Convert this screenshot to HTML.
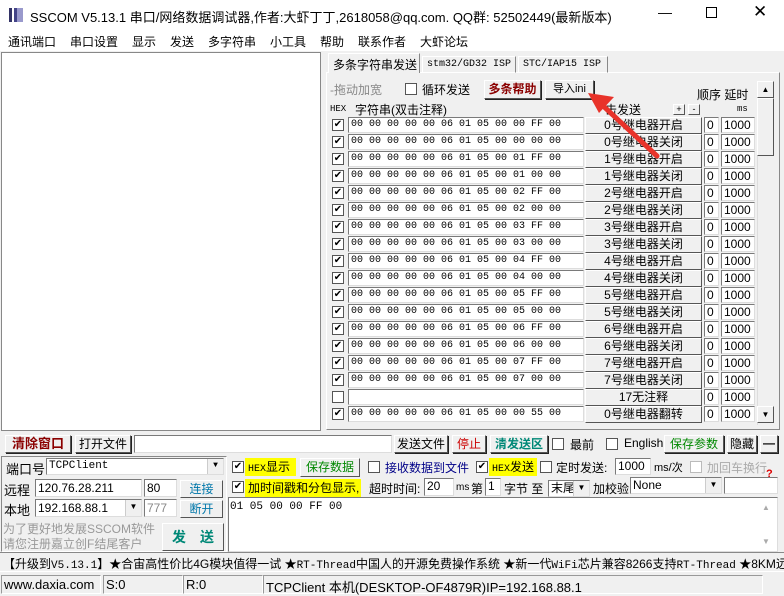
<!DOCTYPE html>
<html><head><meta charset="utf-8"><style>
*{box-sizing:border-box;margin:0;padding:0}
body{width:784px;height:595px;background:#f0f0f0;font-family:"Liberation Sans","Noto Sans CJK SC",sans-serif;font-size:12px;color:#000;position:relative;overflow:hidden}
.a{position:absolute;white-space:nowrap}
.in{position:absolute;background:#fff;border:1px solid #7a7a7a;border-right-color:#ddd;border-bottom-color:#ddd;white-space:nowrap;overflow:hidden;line-height:14px;padding-left:2px}
.btn{position:absolute;background:#f0f0f0;border:1px solid #fff;border-right-color:#555;border-bottom-color:#555;text-align:center;white-space:nowrap;box-shadow:1px 1px 0 #222}
.cb{position:absolute;width:12px;height:12px;background:#fff;border:1px solid #555;font-size:10px;line-height:10px;text-align:center}
.mono{font-family:"Liberation Mono","Noto Sans CJK SC",monospace;font-size:11px}
.hx{font-family:"Liberation Mono",monospace;font-size:10px}
.dd{position:absolute;width:16px;background:#f0f0f0;border-left:1px solid #ccc;top:0;bottom:0;right:0;font-size:8px;text-align:center;line-height:14px}
.m{position:absolute;top:33px;font-size:12px}
</style></head><body>
<div class="a" style="left:0;top:0;width:784px;height:30px;background:#fff"></div>
<div class="a" style="top:8px;left:9px;width:14px;height:14px;background:linear-gradient(90deg,#336 0 3px,#fff 3px 5px,#448 5px 8px,#99c 8px)"></div>
<div class="a" style="left:30px;top:7px;font-size:13px">SSCOM V5.13.1 串口/网络数据调试器,作者:大虾丁丁,2618058@qq.com. QQ群: 52502449(最新版本)</div>
<div class="a" style="left:658px;top:4px;font-size:14px">—</div>
<div class="a" style="left:706px;top:7px;width:11px;height:11px;border:1px solid #000"></div>
<div class="a" style="left:753px;top:2px;font-size:17px">✕</div>
<div class="a" style="left:0;top:30px;width:784px;height:21px;background:#fff"></div>
<div class="m" style="left:8px">通讯端口</div><div class="m" style="left:70px">串口设置</div><div class="m" style="left:132px">显示</div><div class="m" style="left:170px">发送</div><div class="m" style="left:208px">多字符串</div><div class="m" style="left:270px">小工具</div><div class="m" style="left:320px">帮助</div><div class="m" style="left:358px">联系作者</div><div class="m" style="left:420px">大虾论坛</div>
<div class="a" style="left:1px;top:52px;width:320px;height:379px;background:#fff;border:1px solid #888"></div>
<div class="a" style="left:326px;top:72px;width:454px;height:358px;border:1px solid #fff;border-right-color:#888;border-bottom-color:#888"></div>
<div class="a" style="left:328px;top:53px;width:92px;height:20px;background:#f0f0f0;border:1px solid #fff;border-bottom:none;border-right-color:#888;padding:2px 0 0 4px;font-size:12px">多条字符串发送</div>
<div class="a mono" style="left:422px;top:56px;width:94px;height:17px;border:1px solid #fff;border-right-color:#888;padding:2px 0 0 4px;font-size:10px">stm32/GD32 ISP</div>
<div class="a mono" style="left:518px;top:56px;width:90px;height:17px;border:1px solid #fff;border-right-color:#888;padding:2px 0 0 4px;font-size:10px">STC/IAP15 ISP</div>
<div class="a" style="left:330px;top:81px;color:#888;font-size:12px">-拖动加宽</div>
<div class="cb" style="left:405px;top:83px"></div>
<div class="a" style="left:422px;top:81px">循环发送</div>
<div class="btn" style="left:484px;top:80px;width:57px;height:19px;color:#8b0000;font-weight:bold;line-height:17px">多条帮助</div>
<div class="btn" style="left:545px;top:80px;width:49px;height:19px;font-size:11px;line-height:17px">导入ini</div>
<div class="a" style="left:697px;top:86px">顺序 延时</div>
<div class="a mono" style="left:330px;top:104px;font-size:9px">HEX</div>
<div class="a" style="left:355px;top:101px">字符串(双击注释)</div>
<div class="a" style="left:605px;top:101px">击发送</div>
<div class="btn" style="left:673px;top:104px;width:12px;height:11px;font-size:9px;line-height:9px;box-shadow:none">+</div>
<div class="btn" style="left:688px;top:104px;width:12px;height:11px;font-size:9px;line-height:9px;box-shadow:none">-</div>
<div class="a mono" style="left:737px;top:104px;font-size:9px">ms</div>
<div class="a" style="left:757px;top:104px;width:17px;height:321px;background:#f0f0f0;border-left:1px solid #ddd"></div>
<div class="btn" style="left:757px;top:81px;width:17px;height:17px;font-size:8px;line-height:15px;box-shadow:none">▲</div>
<div class="btn" style="left:757px;top:98px;width:17px;height:58px;box-shadow:none"></div>
<div class="btn" style="left:757px;top:406px;width:17px;height:17px;font-size:8px;line-height:15px;box-shadow:none">▼</div>

<div class="cb" style="left:332px;top:119px">✔</div><div class="in hx" style="left:348px;top:117px;width:236px;height:16px">00 00 00 00 00 06 01 05 00 00 FF 00</div><div class="btn" style="left:585px;top:117px;width:117px;height:17px;box-shadow:none;line-height:15px">0号继电器开启</div><div class="in" style="left:704px;top:117px;width:15px;height:16px">0</div><div class="in" style="left:721px;top:117px;width:34px;height:16px">1000</div>
<div class="cb" style="left:332px;top:136px">✔</div><div class="in hx" style="left:348px;top:134px;width:236px;height:16px">00 00 00 00 00 06 01 05 00 00 00 00</div><div class="btn" style="left:585px;top:134px;width:117px;height:17px;box-shadow:none;line-height:15px">0号继电器关闭</div><div class="in" style="left:704px;top:134px;width:15px;height:16px">0</div><div class="in" style="left:721px;top:134px;width:34px;height:16px">1000</div>
<div class="cb" style="left:332px;top:153px">✔</div><div class="in hx" style="left:348px;top:151px;width:236px;height:16px">00 00 00 00 00 06 01 05 00 01 FF 00</div><div class="btn" style="left:585px;top:151px;width:117px;height:17px;box-shadow:none;line-height:15px">1号继电器开启</div><div class="in" style="left:704px;top:151px;width:15px;height:16px">0</div><div class="in" style="left:721px;top:151px;width:34px;height:16px">1000</div>
<div class="cb" style="left:332px;top:170px">✔</div><div class="in hx" style="left:348px;top:168px;width:236px;height:16px">00 00 00 00 00 06 01 05 00 01 00 00</div><div class="btn" style="left:585px;top:168px;width:117px;height:17px;box-shadow:none;line-height:15px">1号继电器关闭</div><div class="in" style="left:704px;top:168px;width:15px;height:16px">0</div><div class="in" style="left:721px;top:168px;width:34px;height:16px">1000</div>
<div class="cb" style="left:332px;top:187px">✔</div><div class="in hx" style="left:348px;top:185px;width:236px;height:16px">00 00 00 00 00 06 01 05 00 02 FF 00</div><div class="btn" style="left:585px;top:185px;width:117px;height:17px;box-shadow:none;line-height:15px">2号继电器开启</div><div class="in" style="left:704px;top:185px;width:15px;height:16px">0</div><div class="in" style="left:721px;top:185px;width:34px;height:16px">1000</div>
<div class="cb" style="left:332px;top:204px">✔</div><div class="in hx" style="left:348px;top:202px;width:236px;height:16px">00 00 00 00 00 06 01 05 00 02 00 00</div><div class="btn" style="left:585px;top:202px;width:117px;height:17px;box-shadow:none;line-height:15px">2号继电器关闭</div><div class="in" style="left:704px;top:202px;width:15px;height:16px">0</div><div class="in" style="left:721px;top:202px;width:34px;height:16px">1000</div>
<div class="cb" style="left:332px;top:221px">✔</div><div class="in hx" style="left:348px;top:219px;width:236px;height:16px">00 00 00 00 00 06 01 05 00 03 FF 00</div><div class="btn" style="left:585px;top:219px;width:117px;height:17px;box-shadow:none;line-height:15px">3号继电器开启</div><div class="in" style="left:704px;top:219px;width:15px;height:16px">0</div><div class="in" style="left:721px;top:219px;width:34px;height:16px">1000</div>
<div class="cb" style="left:332px;top:238px">✔</div><div class="in hx" style="left:348px;top:236px;width:236px;height:16px">00 00 00 00 00 06 01 05 00 03 00 00</div><div class="btn" style="left:585px;top:236px;width:117px;height:17px;box-shadow:none;line-height:15px">3号继电器关闭</div><div class="in" style="left:704px;top:236px;width:15px;height:16px">0</div><div class="in" style="left:721px;top:236px;width:34px;height:16px">1000</div>
<div class="cb" style="left:332px;top:255px">✔</div><div class="in hx" style="left:348px;top:253px;width:236px;height:16px">00 00 00 00 00 06 01 05 00 04 FF 00</div><div class="btn" style="left:585px;top:253px;width:117px;height:17px;box-shadow:none;line-height:15px">4号继电器开启</div><div class="in" style="left:704px;top:253px;width:15px;height:16px">0</div><div class="in" style="left:721px;top:253px;width:34px;height:16px">1000</div>
<div class="cb" style="left:332px;top:272px">✔</div><div class="in hx" style="left:348px;top:270px;width:236px;height:16px">00 00 00 00 00 06 01 05 00 04 00 00</div><div class="btn" style="left:585px;top:270px;width:117px;height:17px;box-shadow:none;line-height:15px">4号继电器关闭</div><div class="in" style="left:704px;top:270px;width:15px;height:16px">0</div><div class="in" style="left:721px;top:270px;width:34px;height:16px">1000</div>
<div class="cb" style="left:332px;top:289px">✔</div><div class="in hx" style="left:348px;top:287px;width:236px;height:16px">00 00 00 00 00 06 01 05 00 05 FF 00</div><div class="btn" style="left:585px;top:287px;width:117px;height:17px;box-shadow:none;line-height:15px">5号继电器开启</div><div class="in" style="left:704px;top:287px;width:15px;height:16px">0</div><div class="in" style="left:721px;top:287px;width:34px;height:16px">1000</div>
<div class="cb" style="left:332px;top:306px">✔</div><div class="in hx" style="left:348px;top:304px;width:236px;height:16px">00 00 00 00 00 06 01 05 00 05 00 00</div><div class="btn" style="left:585px;top:304px;width:117px;height:17px;box-shadow:none;line-height:15px">5号继电器关闭</div><div class="in" style="left:704px;top:304px;width:15px;height:16px">0</div><div class="in" style="left:721px;top:304px;width:34px;height:16px">1000</div>
<div class="cb" style="left:332px;top:323px">✔</div><div class="in hx" style="left:348px;top:321px;width:236px;height:16px">00 00 00 00 00 06 01 05 00 06 FF 00</div><div class="btn" style="left:585px;top:321px;width:117px;height:17px;box-shadow:none;line-height:15px">6号继电器开启</div><div class="in" style="left:704px;top:321px;width:15px;height:16px">0</div><div class="in" style="left:721px;top:321px;width:34px;height:16px">1000</div>
<div class="cb" style="left:332px;top:340px">✔</div><div class="in hx" style="left:348px;top:338px;width:236px;height:16px">00 00 00 00 00 06 01 05 00 06 00 00</div><div class="btn" style="left:585px;top:338px;width:117px;height:17px;box-shadow:none;line-height:15px">6号继电器关闭</div><div class="in" style="left:704px;top:338px;width:15px;height:16px">0</div><div class="in" style="left:721px;top:338px;width:34px;height:16px">1000</div>
<div class="cb" style="left:332px;top:357px">✔</div><div class="in hx" style="left:348px;top:355px;width:236px;height:16px">00 00 00 00 00 06 01 05 00 07 FF 00</div><div class="btn" style="left:585px;top:355px;width:117px;height:17px;box-shadow:none;line-height:15px">7号继电器开启</div><div class="in" style="left:704px;top:355px;width:15px;height:16px">0</div><div class="in" style="left:721px;top:355px;width:34px;height:16px">1000</div>
<div class="cb" style="left:332px;top:374px">✔</div><div class="in hx" style="left:348px;top:372px;width:236px;height:16px">00 00 00 00 00 06 01 05 00 07 00 00</div><div class="btn" style="left:585px;top:372px;width:117px;height:17px;box-shadow:none;line-height:15px">7号继电器关闭</div><div class="in" style="left:704px;top:372px;width:15px;height:16px">0</div><div class="in" style="left:721px;top:372px;width:34px;height:16px">1000</div>
<div class="cb" style="left:332px;top:391px"></div><div class="in hx" style="left:348px;top:389px;width:236px;height:16px"></div><div class="btn" style="left:585px;top:389px;width:117px;height:17px;box-shadow:none;line-height:15px">17无注释</div><div class="in" style="left:704px;top:389px;width:15px;height:16px">0</div><div class="in" style="left:721px;top:389px;width:34px;height:16px">1000</div>
<div class="cb" style="left:332px;top:408px">✔</div><div class="in hx" style="left:348px;top:406px;width:236px;height:16px">00 00 00 00 00 06 01 05 00 00 55 00</div><div class="btn" style="left:585px;top:406px;width:117px;height:17px;box-shadow:none;line-height:15px">0号继电器翻转</div><div class="in" style="left:704px;top:406px;width:15px;height:16px">0</div><div class="in" style="left:721px;top:406px;width:34px;height:16px">1000</div>

<svg class="a" style="left:0;top:0" width="784" height="595"><line x1="657" y1="156" x2="600" y2="103" stroke="#e8332a" stroke-width="5" stroke-linecap="round"/><polygon points="588,93 614,97 599,113" fill="#e8332a"/></svg>

<div class="btn" style="left:5px;top:435px;width:66px;height:18px;color:#8b0000;font-weight:bold;line-height:16px;font-size:13px">清除窗口</div>
<div class="btn" style="left:75px;top:435px;width:56px;height:18px;line-height:16px">打开文件</div>
<div class="in" style="left:134px;top:435px;width:258px;height:18px"></div>
<div class="btn" style="left:394px;top:435px;width:54px;height:18px;line-height:16px">发送文件</div>
<div class="btn" style="left:452px;top:435px;width:34px;height:18px;line-height:16px;color:#c00">停止</div>
<div class="btn" style="left:490px;top:435px;width:58px;height:18px;line-height:16px;color:#087;font-weight:bold">清发送区</div>
<div class="cb" style="left:552px;top:438px"></div><div class="a" style="left:570px;top:436px">最前</div>
<div class="cb" style="left:606px;top:438px"></div><div class="a" style="left:624px;top:436px">English</div>
<div class="btn" style="left:664px;top:435px;width:60px;height:18px;line-height:16px;color:#080">保存参数</div>
<div class="btn" style="left:727px;top:435px;width:30px;height:18px;line-height:16px">隐藏</div>
<div class="btn" style="left:760px;top:435px;width:18px;height:18px;line-height:14px;font-weight:bold">—</div>
<div class="a" style="left:1px;top:456px;width:226px;height:96px;border:1px solid #888;border-right-color:#fff;border-bottom-color:#fff"></div>
<div class="a" style="left:6px;top:459px;font-size:13px">端口号</div>
<div class="in mono" style="left:46px;top:458px;width:178px;height:17px;font-size:11px;line-height:15px">TCPClient<div class="dd">▼</div></div>
<div class="a" style="left:4px;top:480px;font-size:13px">远程</div>
<div class="in" style="left:35px;top:479px;width:107px;height:18px;line-height:16px">120.76.28.211</div>
<div class="in" style="left:144px;top:479px;width:33px;height:18px;line-height:16px">80</div>
<div class="btn" style="left:180px;top:480px;width:43px;height:18px;line-height:16px;color:#07a;box-shadow:none">连接</div>
<div class="a" style="left:4px;top:500px;font-size:13px">本地</div>
<div class="in" style="left:35px;top:499px;width:107px;height:18px;line-height:16px">192.168.88.1<div class="dd">▼</div></div>
<div class="in" style="left:144px;top:499px;width:33px;height:18px;line-height:16px;color:#888">777</div>
<div class="btn" style="left:180px;top:500px;width:43px;height:18px;line-height:16px;color:#07a;box-shadow:none">断开</div>
<div class="a" style="left:3px;top:522px;color:#999;line-height:15px">为了更好地发展SSCOM软件<br>请您注册嘉立创F结尾客户</div>
<div class="btn" style="left:162px;top:523px;width:62px;height:28px;line-height:26px;color:#087;font-weight:bold;font-size:14px;box-shadow:none">发　送</div>
<div class="cb" style="left:232px;top:461px">✔</div>
<div class="a" style="left:245px;top:458px;width:51px;height:18px;background:#ff0;padding-left:3px;line-height:18px"><span class="mono" style="font-size:10px">HEX</span>显示</div>
<div class="btn" style="left:300px;top:458px;width:60px;height:19px;line-height:17px;color:#080;box-shadow:none">保存数据</div>
<div class="cb" style="left:368px;top:461px"></div>
<div class="a" style="left:385px;top:459px;color:#008">接收数据到文件</div>
<div class="cb" style="left:476px;top:461px">✔</div>
<div class="a" style="left:489px;top:458px;width:48px;height:18px;background:#ff0;padding-left:3px;line-height:18px"><span class="mono" style="font-size:10px">HEX</span>发送</div>
<div class="cb" style="left:540px;top:461px"></div>
<div class="a" style="left:556px;top:459px">定时发送:</div>
<div class="in" style="left:615px;top:458px;width:36px;height:17px;line-height:15px">1000</div>
<div class="a" style="left:654px;top:459px;font-size:11px">ms/次</div>
<div class="cb" style="left:690px;top:461px;border-color:#bbb"></div>
<div class="a" style="left:707px;top:459px;color:#aaa">加回车换行</div>
<div class="a" style="left:766px;top:468px;color:#d00;font-weight:bold;font-size:11px">?</div>
<div class="cb" style="left:232px;top:481px">✔</div>
<div class="a" style="left:245px;top:479px;width:116px;height:18px;background:#ff0;padding-left:3px;line-height:18px">加时间戳和分包显示,</div>
<div class="a" style="left:369px;top:480px">超时时间:</div>
<div class="in" style="left:424px;top:478px;width:30px;height:18px;line-height:14px">20</div>
<div class="a" style="left:456px;top:482px;font-size:10px">ms</div>
<div class="a" style="left:471px;top:480px">第</div>
<div class="in" style="left:485px;top:478px;width:16px;height:18px;line-height:14px">1</div>
<div class="a" style="left:504px;top:480px">字节 至</div>
<div class="in" style="left:548px;top:480px;width:42px;height:17px;line-height:15px">末尾<div class="dd">▼</div></div>
<div class="a" style="left:593px;top:480px">加校验</div>
<div class="in" style="left:630px;top:477px;width:92px;height:17px;line-height:15px">None<div class="dd">▼</div></div>
<div class="in" style="left:724px;top:477px;width:54px;height:17px"></div>
<div class="in mono" style="left:228px;top:497px;width:550px;height:55px;padding:2px 0 0 1px">01 05 00 00 FF 00</div>
<div class="a" style="left:762px;top:503px;font-size:8px;color:#aaa">▲</div>
<div class="a" style="left:762px;top:537px;font-size:8px;color:#aaa">▼</div>
<div class="a" style="left:0;top:552px;width:784px;height:20px;border-top:1px solid #888;border-bottom:1px solid #fff"></div>
<div class="a" style="left:3px;top:555px;font-size:12px">【升级到<span class="mono">V5.13.1</span>】★合宙高性价比4G模块值得一试 ★<span class="mono">RT-Thread</span>中国人的开源免费操作系统 ★新一代<span class="mono">WiFi</span>芯片兼容8266支持<span class="mono">RT-Thread</span> ★8KM远距</div>
<div class="a" style="left:0;top:573px;width:784px;height:22px;background:#f0f0f0"></div>
<div class="a" style="left:1px;top:575px;width:100px;height:19px;border:1px solid #999;border-right-color:#fff;border-bottom-color:#fff;padding:1px 2px;font-size:13px">www.daxia.com</div>
<div class="a" style="left:103px;top:575px;width:80px;height:19px;border:1px solid #999;border-right-color:#fff;border-bottom-color:#fff;padding:1px 2px;font-size:13px">S:0</div>
<div class="a" style="left:183px;top:575px;width:80px;height:19px;border:1px solid #999;border-right-color:#fff;border-bottom-color:#fff;padding:1px 2px;font-size:13px">R:0</div>
<div class="a" style="left:263px;top:575px;width:500px;height:19px;border:1px solid #999;border-right-color:#fff;border-bottom-color:#fff;padding:1px 2px;font-size:13px">TCPClient 本机(DESKTOP-OF4879R)IP=192.168.88.1</div>
</body></html>
